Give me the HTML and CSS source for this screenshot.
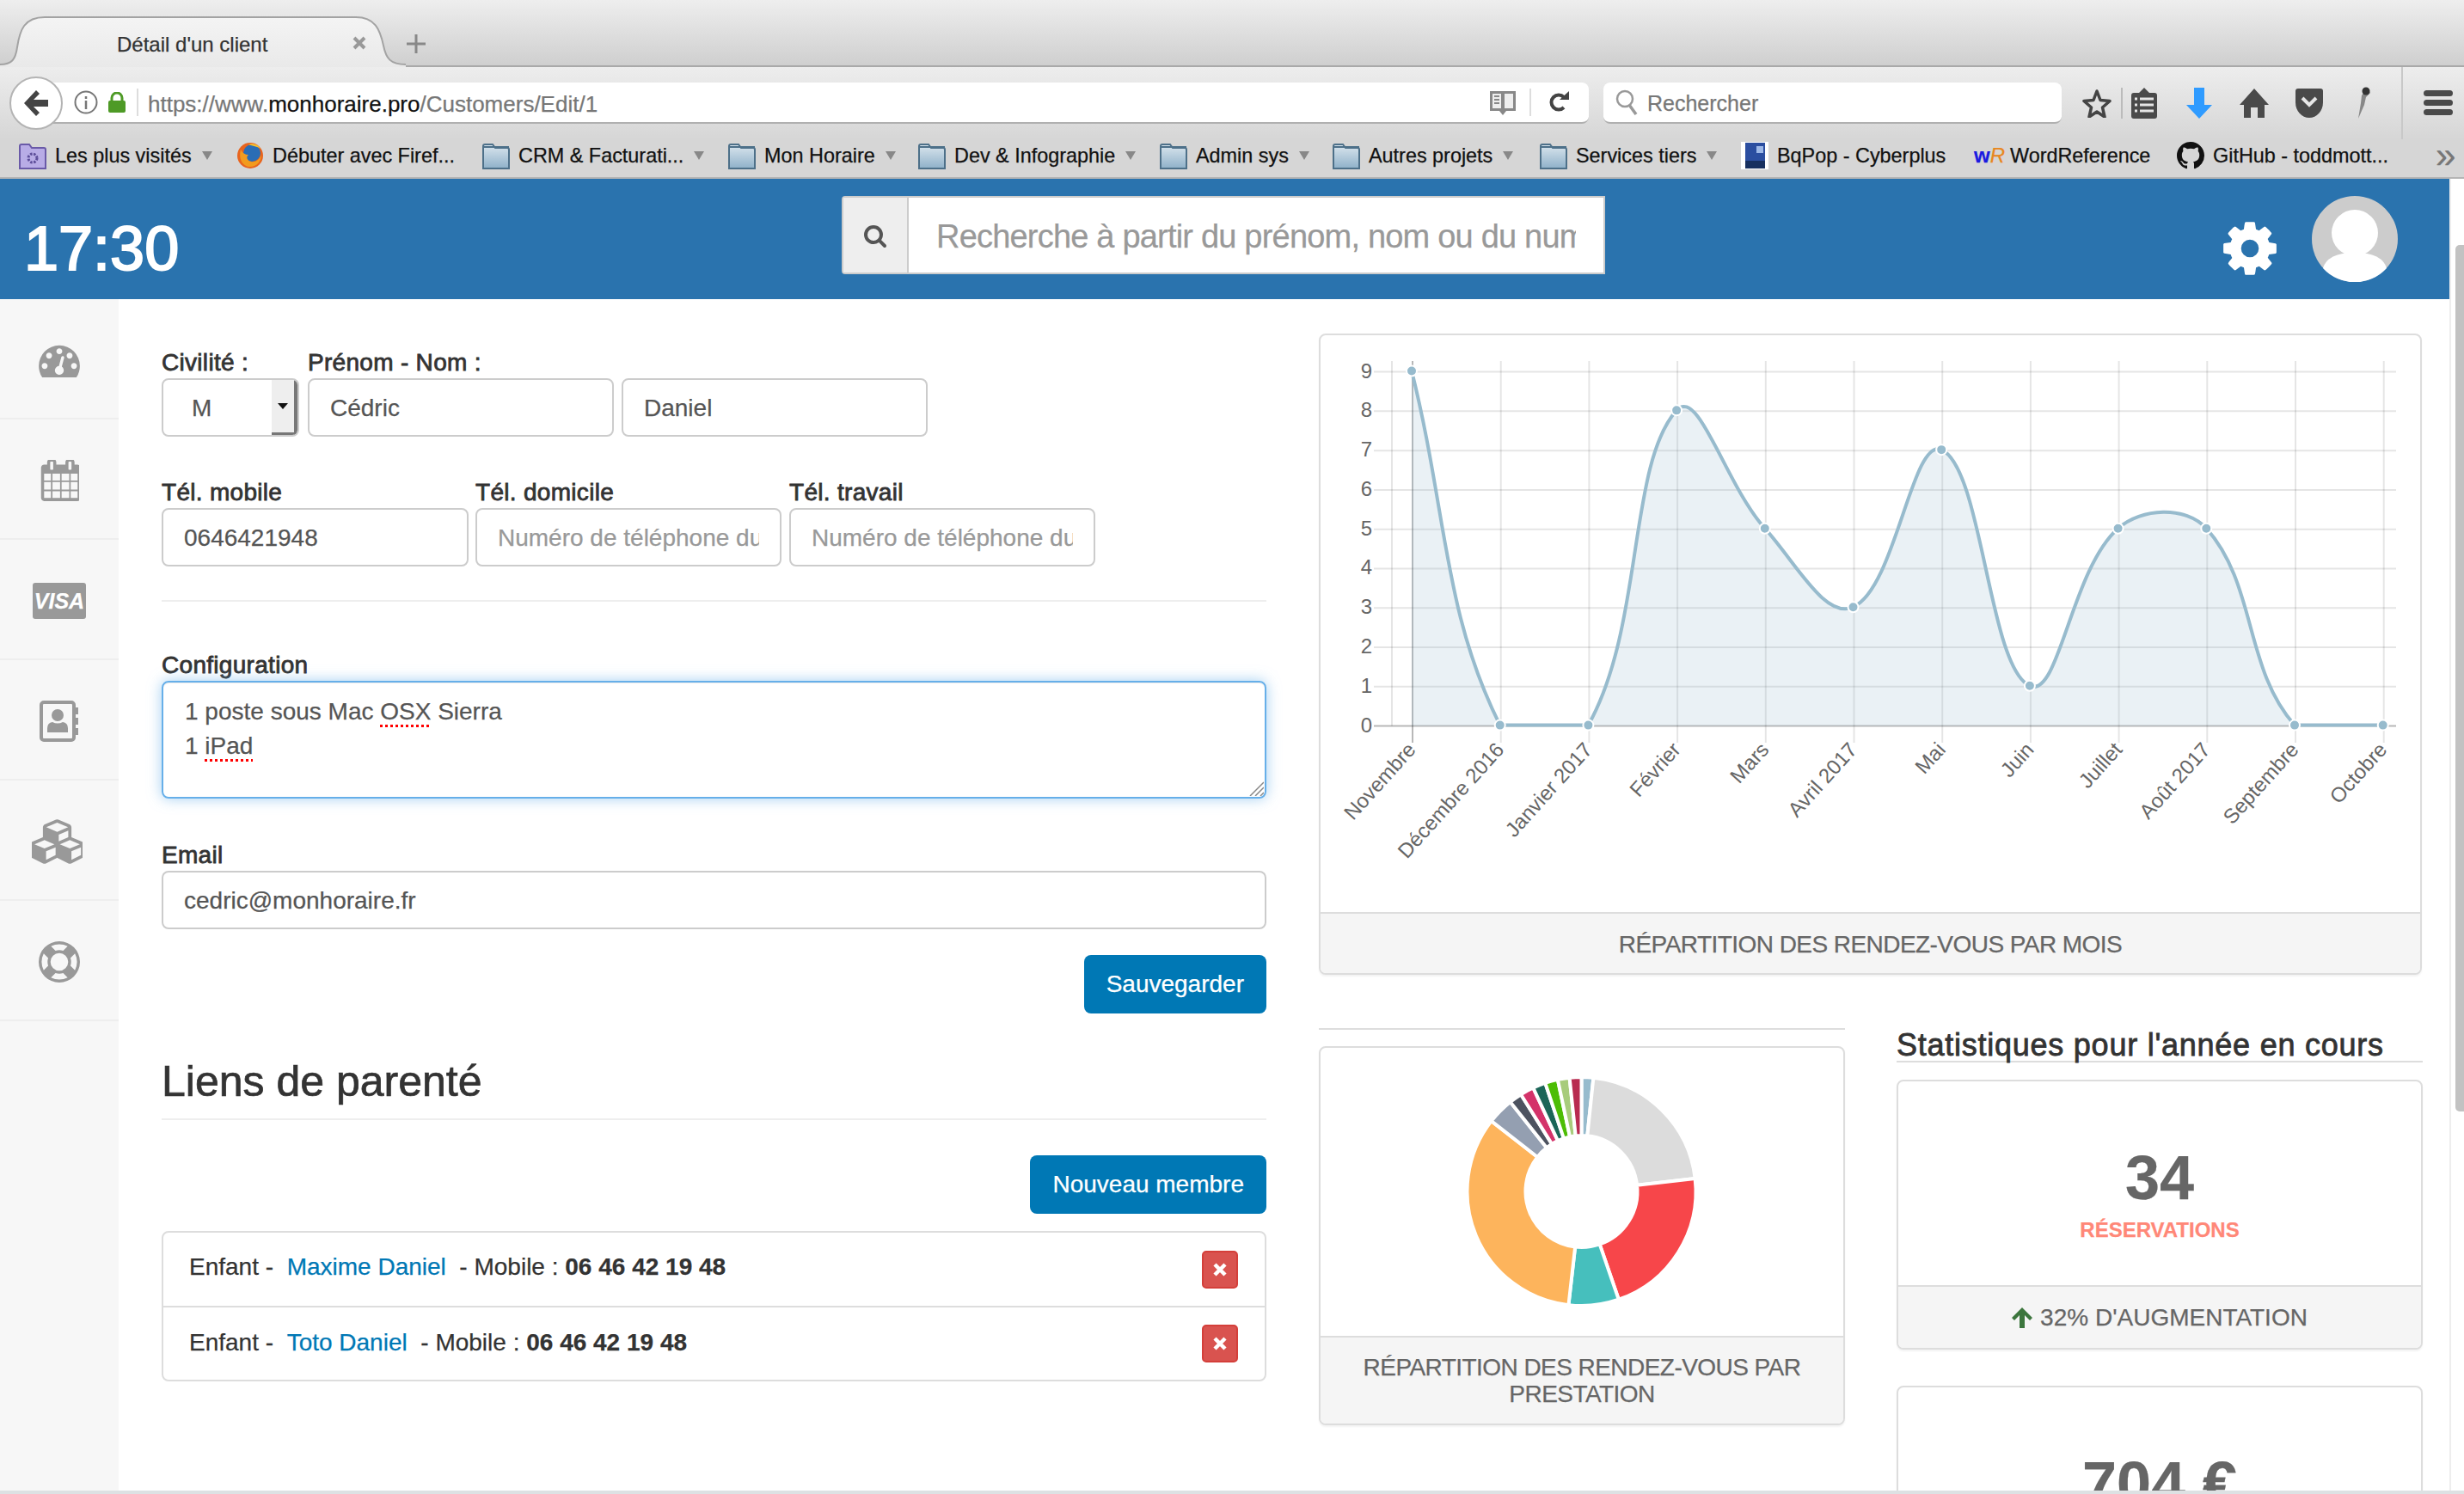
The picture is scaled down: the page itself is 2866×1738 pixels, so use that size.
FILE: index.html
```html
<!DOCTYPE html>
<html lang="fr">
<head>
    <meta charset="UTF-8">
    <title>Détail d'un client</title>
    <link rel="stylesheet" href="styles.css">
</head>
<body>

    <div class="tabstrip">
        <svg class="tab-shape" viewBox="0 0 480 60" width="480" height="60">
            <defs>
                <linearGradient id="tabfill" x1="0" y1="0" x2="0" y2="1">
                    <stop offset="0" stop-color="#f4f4f4"/>
                    <stop offset="1" stop-color="#e9e9e9"/>
                </linearGradient>
            </defs>
            <path d="M0 57c14 0 18-6 20-20 3-20 8-35 32-35h362c22 0 28 14 32 33 3 15 8 22 26 22v3H0z" fill="url(#tabfill)"/>
            <path d="M0 57c14 0 18-6 20-20 3-20 8-35 32-35h362c22 0 28 14 32 33 3 15 8 22 26 22" fill="none" stroke="#a3a3a3" stroke-width="2"/>
        </svg>
        <span class="tab-title">Détail d'un client</span>
        <svg class="tab-close" viewBox="0 0 16 16" width="16" height="16"><path d="M2 2l12 12M14 2L2 14" stroke="#999" stroke-width="4"/></svg>
        <svg class="tab-new" viewBox="0 0 22 22" width="22" height="22"><path d="M11 0v22M0 11h22" stroke="#888" stroke-width="3"/></svg>
    </div>

    <div class="navbar">
        <div class="back-btn">
            <svg viewBox="0 0 28 30" width="28" height="30"><path d="M14 0l4 4-7 7h17v8H11l7 7-4 4L0 15z" fill="#444"/></svg>
        </div>
        <div class="urlbar">
            <svg class="url-info" viewBox="0 0 28 28" width="28" height="28"><circle cx="14" cy="14" r="12.500" fill="none" stroke="#777" stroke-width="2"/><path d="M14 7v3M14 12v10" stroke="#777" stroke-width="2.500"/></svg>
            <svg class="url-lock" viewBox="0 0 20 24" width="20" height="24"><path d="M4 10V7a6 6 0 0112 0v3" fill="none" stroke="#4e9a26" stroke-width="3"/><rect y="10" width="20" height="14" rx="2" fill="#4e9a26"/></svg>
            <span class="url-sep"></span>
            <span class="url-text">https://www.<b>monhoraire.pro</b>/Customers/Edit/1</span>
            <svg class="url-reader" viewBox="0 0 32 32" width="32" height="32"><path d="M1 3h30v23H20l-4 5-4-5H1z" fill="#888"/><path d="M4 6h10v17H4zM18 6h10v17H18z" fill="#eee"/><path d="M6 9h6M6 13h6M6 17h6" stroke="#888" stroke-width="2"/></svg>
            <span class="url-sep"></span>
            <svg class="url-reload" viewBox="0 0 24 28" width="24" height="28"><path d="M18 20a8.500 8.500 0 1 1 0-12" fill="none" stroke="#444" stroke-width="4"/><path d="M13 11h11V1z" fill="#444"/></svg>
        </div>
        <div class="searchbar">
            <svg viewBox="0 0 26 30" width="26" height="30"><circle cx="11" cy="11" r="9" fill="none" stroke="#999" stroke-width="2.500"/><path d="M16 18l8 11" stroke="#999" stroke-width="3.500"/></svg>
            <span>Rechercher</span>
        </div>
        <div class="nav-icons">
            <svg class="nav-star" viewBox="0 0 34 34" width="34" height="34"><path d="M17 3l4 10.500 11 1-8.500 7.500 2.500 11L17 27l-9 6 2.500-11L2 14.500l11-1z" fill="none" stroke="#444" stroke-width="3.500" stroke-linejoin="round"/></svg>
            <span class="nav-sep"></span>
            <svg class="nav-list" viewBox="0 0 30 36" width="30" height="36"><path d="M15 0l6 6h6a3 3 0 013 3v24a3 3 0 01-3 3H3a3 3 0 01-3-3V9a3 3 0 013-3h6z" fill="#4a4a4a"/><path d="M10 13h16M10 20h16M10 27h16M4 13h3M4 20h3M4 27h3" stroke="#e6e6e6" stroke-width="3"/></svg>
            <svg class="nav-down" viewBox="0 0 30 36" width="30" height="36"><path d="M9 0h12v20h9L15 36 0 20h9z" fill="#2f9bff"/></svg>
            <svg class="nav-home" viewBox="0 0 34 34" width="34" height="34"><path d="M17 0l17 19h-5v15h-8V22h-8v12H5V19H0z" fill="#4a4a4a"/></svg>
            <svg class="nav-pocket" viewBox="0 0 32 34" width="32" height="34"><path d="M3 0h26a3 3 0 013 3v13a16 18 0 01-32 0V3a3 3 0 013-3z" fill="#4a4a4a"/><path d="M8 11l8 8 8-8" fill="none" stroke="#e6e6e6" stroke-width="4"/></svg>
            <svg class="nav-pin" viewBox="0 0 20 40" width="20" height="40"><path d="M14 2l4 6-5 5-2 9-7 16 3-18 1-9z" fill="#888"/><circle cx="13" cy="6" r="4.500" fill="#333"/></svg>
            <span class="nav-sep nav-sep-last"></span>
            <svg class="nav-menu" viewBox="0 0 34 30" width="34" height="30"><rect width="34" height="7" rx="3.500" fill="#4a4a4a"/><rect y="11" width="34" height="7" rx="3.500" fill="#4a4a4a"/><rect y="22" width="34" height="7" rx="3.500" fill="#4a4a4a"/></svg>
        </div>
    </div>

    <div class="bookmarks">
        <div class="bm">
            <svg class="bm-icon" viewBox="0 0 32 32" width="32" height="32"><path d="M1 31V5q0-2 2-2h9l3 4h14q2 0 2 2v22z" fill="#b8ace6" stroke="#6a5aa8" stroke-width="2"/><circle cx="16" cy="19" r="5" fill="none" stroke="#5c4d99" stroke-width="3" stroke-dasharray="2.500 1.500"/></svg>
            <span>Les plus visités</span><i class="caret"></i>
        </div>
        <div class="bm">
            <svg class="bm-icon" viewBox="0 0 32 32" width="32" height="32"><circle cx="16" cy="16" r="15" fill="#e8641e"/><circle cx="18" cy="13" r="10" fill="#2a6db5"/><path d="M5 9c-3 12 3 20 11 20s13-7 13-14c-2 6-7 9-12 8-5-1-6-6-3-8-4 0-7-2-9-6z" fill="#f29b1d"/><path d="M14 3c6-2 11 0 14 5-4-3-9-3-14-5z" fill="#f6c12e"/></svg>
            <span>Débuter avec Firef...</span>
        </div>
        <div class="bm">
            <svg class="bm-icon" viewBox="0 0 32 32" width="32" height="32"><use href="#folder"/></svg>
            <span>CRM &amp; Facturati...</span><i class="caret"></i>
        </div>
        <div class="bm">
            <svg class="bm-icon" viewBox="0 0 32 32" width="32" height="32"><use href="#folder"/></svg>
            <span>Mon Horaire</span><i class="caret"></i>
        </div>
        <div class="bm">
            <svg class="bm-icon" viewBox="0 0 32 32" width="32" height="32"><use href="#folder"/></svg>
            <span>Dev &amp; Infographie</span><i class="caret"></i>
        </div>
        <div class="bm">
            <svg class="bm-icon" viewBox="0 0 32 32" width="32" height="32"><use href="#folder"/></svg>
            <span>Admin sys</span><i class="caret"></i>
        </div>
        <div class="bm">
            <svg class="bm-icon" viewBox="0 0 32 32" width="32" height="32"><use href="#folder"/></svg>
            <span>Autres projets</span><i class="caret"></i>
        </div>
        <div class="bm">
            <svg class="bm-icon" viewBox="0 0 32 32" width="32" height="32"><use href="#folder"/></svg>
            <span>Services tiers</span><i class="caret"></i>
        </div>
        <div class="bm">
            <svg class="bm-icon" viewBox="0 0 32 32" width="32" height="32"><rect width="32" height="32" fill="#fff"/><rect x="5" y="1" width="23" height="30" fill="#2b4ea0"/><rect x="18" y="5" width="8" height="8" fill="#9db8e8"/><rect x="5" y="22" width="23" height="9" fill="#17305f"/></svg>
            <span>BqPop - Cyberplus</span>
        </div>
        <div class="bm">
            <span class="wr-logo"><b>w</b><em>R</em></span>
            <span>WordReference</span>
        </div>
        <div class="bm">
            <svg class="bm-icon" viewBox="0 0 16 16" width="32" height="32"><path d="M8 0C3.58 0 0 3.58 0 8c0 3.540 2.290 6.530 5.470 7.590.4.070.55-.17.55-.38 0-.19-.01-.82-.01-1.490-2.010.37-2.530-.49-2.690-.94-.09-.23-.48-.94-.82-1.130-.28-.15-.68-.52-.01-.53.63-.01 1.080.58 1.230.82.72 1.210 1.870.87 2.330.66.07-.52.28-.87.51-1.070-1.780-.2-3.640-.89-3.640-3.950 0-.87.31-1.590.82-2.150-.08-.2-.36-1.020.08-2.120 0 0 .67-.21 2.200.82.64-.18 1.320-.27 2-.27.68 0 1.360.09 2 .27 1.530-1.040 2.200-.82 2.200-.82.44 1.100.16 1.920.08 2.120.51.56.82 1.270.82 2.150 0 3.070-1.870 3.750-3.650 3.950.29.25.54.73.54 1.480 0 1.070-.01 1.930-.01 2.200 0 .21.15.46.55.38A8.013 8.013 0 0016 8c0-4.420-3.580-8-8-8z" fill="#111"/></svg>
            <span>GitHub - toddmott...</span>
        </div>
        <div class="bm-more">»</div>
    </div>

    <svg class="defs-only" width="0" height="0">
        <defs>
            <linearGradient id="folderfill" x1="0" y1="0" x2="0" y2="1">
                <stop offset="0" stop-color="#dbe6ee"/>
                <stop offset="1" stop-color="#8fb1c9"/>
            </linearGradient>
            <g id="folder">
                <path d="M1 31V5q0-2 2-2h9l3 4h14q2 0 2 2v22z" fill="url(#folderfill)" stroke="#4d7089" stroke-width="2"/>
                <path d="M1 6h30" stroke="#4d7089" stroke-width="2"/>
            </g>
        </defs>
    </svg>

    <div class="page">
        <div class="app">
            <header class="topbar">
                <div class="clock">17:30</div>
                <div class="search-group">
                    <div class="search-addon">
                        <svg viewBox="0 0 1792 1792" width="28" height="28"><path fill="#555" d="M1216 832q0-185-131.500-316.500t-316.500-131.500-316.500 131.500-131.500 316.500 131.500 316.500 316.500 131.500 316.500-131.500 131.500-316.500zm512 832q0 52-38 90t-90 38q-54 0-90-38l-343-342q-179 124-399 124-143 0-273.500-55.500t-225-150-150-225-55.500-273.500 55.500-273.500 150-225 225-150 273.500-55.500 273.500 55.500 225 150 150 225 55.500 273.500q0 220-124 399l343 343q37 37 37 90z"/></svg>
                    </div>
                    <input class="search-input" type="text" placeholder="Recherche à partir du prénom, nom ou du numéro de téléphone">
                </div>
                <svg class="gear" viewBox="0 0 1792 1792" width="72" height="72"><path fill="#fff" d="M1152 896q0-106-75-181t-181-75-181 75-75 181 75 181 181 75 181-75 75-181zm512-109v222q0 12-8 23t-20 13l-185 28q-19 54-39 91 35 50 107 138 10 12 10 25t-9 23q-27 37-99 108t-94 71q-12 0-26-9l-138-108q-44 23-91 38-16 136-29 186-7 28-36 28h-222q-14 0-24.500-8.500t-11.500-21.500l-28-184q-49-16-90-37l-141 107q-10 9-25 9-14 0-25-11-126-114-165-168-7-10-7-23 0-12 8-23 15-21 51-66.500t54-70.500q-27-50-41-99l-183-27q-13-2-21-12.500t-8-23.500v-222q0-12 8-23t19-13l186-28q14-46 39-92-40-57-107-138-10-12-10-24 0-10 9-23 26-36 98.500-107.500t94.500-71.500q13 0 26 10l138 107q44-23 91-38 16-136 29-186 7-28 36-28h222q14 0 24.500 8.500t11.500 21.500l28 184q49 16 90 37l142-107q9-9 24-9 13 0 25 10 129 119 165 170 7 8 7 22 0 12-8 23-15 21-51 66.500t-54 70.500q26 50 41 98l183 28q13 2 21 12.500t8 23.500z"/></svg>
                <svg class="avatar" viewBox="0 0 100 100" width="100" height="100">
                    <circle cx="50" cy="50" r="50" fill="#ccc"/>
                    <ellipse cx="50" cy="43" rx="27" ry="27" fill="#fff"/>
                    <path d="M13 84c4-14 20-18 37-18s33 4 37 18a50 50 0 01-74 0z" fill="#fff"/>
                </svg>
            </header>

            <div class="main">
                <nav class="sidebar">
                    <a class="side-item">
                        <svg viewBox="0 0 1792 1500" width="48" height="40"><path fill="#999" d="M384 1152q0-53-37.500-90.500t-90.500-37.500-90.500 37.500-37.500 90.500 37.500 90.500 90.500 37.500 90.500-37.500 37.500-90.500zm192-448q0-53-37.500-90.500t-90.500-37.500-90.500 37.500-37.500 90.500 37.500 90.500 90.500 37.500 90.500-37.500 37.500-90.500zm428 481l101-382q6-26-7.500-48.500t-38.500-29.500-48 6.500-30 39.500l-101 382q-60 5-107 43.500t-63 98.500q-20 77 20 146t117 89 146-20 89-117q16-60-6-117t-72-91zm660-33q0-53-37.500-90.500t-90.500-37.500-90.500 37.500-37.500 90.500 37.500 90.500 90.500 37.500 90.500-37.500 37.500-90.500zm-640-640q0-53-37.500-90.500t-90.500-37.500-90.500 37.500-37.500 90.500 37.500 90.500 90.500 37.500 90.500-37.500 37.500-90.500zm448 192q0-53-37.500-90.500t-90.500-37.500-90.500 37.500-37.500 90.500 37.500 90.500 90.500 37.500 90.500-37.500 37.500-90.500zm320 448q0 261-141 483-19 29-54 29h-1402q-35 0-54-29-141-221-141-483 0-182 71-348t191-286 286-191 348-71 348 71 286 191 191 286 71 348z" transform="translate(0 -150)"/></svg>
                    </a>
                    <a class="side-item">
                        <svg viewBox="0 64 1664 1728" width="46" height="48"><path fill="#999" d="M192 1664h288v-288h-288v288zm352 0h320v-288h-320v288zm-352-352h288v-320h-288v320zm352 0h320v-320h-320v320zm-352-384h288v-288h-288v288zm736 736h320v-288h-320v288zm-384-736h320v-288h-320v288zm768 736h288v-288h-288v288zm-384-352h320v-320h-320v320zm-352-864v-288q0-13-9.500-22.500t-22.500-9.500h-64q-13 0-22.500 9.500t-9.500 22.500v288q0 13 9.500 22.500t22.500 9.500h64q13 0 22.500-9.500t9.500-22.500zm736 864h288v-320h-288v320zm-384-384h320v-288h-320v288zm384 0h288v-288h-288v288zm32-480v-288q0-13-9.500-22.500t-22.500-9.500h-64q-13 0-22.500 9.500t-9.500 22.500v288q0 13 9.500 22.500t22.500 9.500h64q13 0 22.500-9.500t9.500-22.500zm384-64v1280q0 52-38 90t-90 38h-1408q-52 0-90-38t-38-90v-1280q0-52 38-90t90-38h128v-96q0-66 47-113t113-47h64q66 0 113 47t47 113v96h384v-96q0-66 47-113t113-47h64q66 0 113 47t47 113v96h128q52 0 90 38t38 90z"/></svg>
                    </a>
                    <a class="side-item">
                        <span class="visa-card">VISA</span>
                    </a>
                    <a class="side-item">
                        <svg viewBox="0 0 46 48" width="46" height="48"><rect x="2" y="2" width="38" height="44" rx="3" fill="none" stroke="#999" stroke-width="4"/><path d="M40 8h5v8h-5zM40 20h5v8h-5zM40 32h5v8h-5z" fill="#999"/><circle cx="21" cy="17" r="7" fill="#999"/><path d="M9 37v-5q0-6 6-7 6 3 12 0 6 1 6 7v5z" fill="#999"/></svg>
                    </a>
                    <a class="side-item side-cubes">
                        <svg viewBox="0 0 2048 1792" width="59" height="52"><path fill="#999" d="M576 1632l384-192v-314l-384 164v342zm-64-454l404-173-404-173-404 173 404 173zm1088 454l384-192v-314l-384 164v342zm-64-454l404-173-404-173-404 173 404 173zm-448-293l384-165v-266l-384 164v267zm-64-379l441-189-441-189-441 189 441 189zm1088 518v416q0 36-19 67t-52 47l-448 224q-25 14-57 14t-57-14l-448-224q-4-2-7-4-2 2-7 4l-448 224q-25 14-57 14t-57-14l-448-224q-33-16-52-47t-19-67v-416q0-38 21.500-70t56.500-48l434-186v-400q0-38 21.500-70t56.500-48l448-192q23-10 50-10t50 10l448 192q35 16 56.500 48t21.500 70v400l434 186q36 16 57 48t21 70z"/></svg>
                    </a>
                    <a class="side-item">
                        <svg viewBox="0 0 1792 1792" width="48" height="48"><path fill="#999" d="M896 0q182 0 348 71t286 191 191 286 71 348-71 348-191 286-286 191-348 71-348-71-286-191-191-286-71-348 71-348 191-286 286-191 348-71zm0 128q-190 0-361 90l194 194q82-28 167-28t167 28l194-194q-171-90-361-90zm-678 1129l194-194q-28-82-28-167t28-167l-194-194q-90 171-90 361t90 361zm678 407q190 0 361-90l-194-194q-82 28-167 28t-167-28l-194 194q171 90 361 90zm0-384q159 0 271.500-112.500t112.500-271.500-112.500-271.500-271.500-112.500-271.500 112.500-112.500 271.500 112.500 271.500 271.500 112.500zm484-217l194 194q90-171 90-361t-90-361l-194 194q28 82 28 167t-28 167z"/></svg>
                    </a>
                </nav>

                <section class="form-col">
                    <div class="form-row">
                        <div class="group group-civ">
                            <label>Civilité :</label>
                            <div class="select-box"><span>M</span><i class="select-arrow"></i></div>
                        </div>
                        <div class="group">
                            <label>Prénom - Nom :</label>
                            <div class="name-pair">
                                <input class="control control-name" type="text" value="Cédric">
                                <input class="control control-name" type="text" value="Daniel">
                            </div>
                        </div>
                    </div>

                    <div class="form-row form-row-phone">
                        <div class="group">
                            <label>Tél. mobile</label>
                            <input class="control control-mobile" type="text" value="0646421948">
                        </div>
                        <div class="group">
                            <label>Tél. domicile</label>
                            <input class="control control-name" type="text" placeholder="Numéro de téléphone du domicile">
                        </div>
                        <div class="group">
                            <label>Tél. travail</label>
                            <input class="control control-name" type="text" placeholder="Numéro de téléphone du travail">
                        </div>
                    </div>

                    <hr class="sep">

                    <label>Configuration</label>
                    <div class="textarea-box">
                        <div>1 poste sous Mac <span class="misspelt">OSX</span> Sierra</div>
                        <div>1 <span class="misspelt">iPad</span></div>
                        <svg class="resize-grip" viewBox="0 0 18 18" width="18" height="18"><path d="M18 2L2 18M18 8L8 18M18 14l-4 4" stroke="#888" stroke-width="1.500"/></svg>
                    </div>

                    <label class="label-email">Email</label>
                    <input class="control" type="text" value="cedric@monhoraire.fr">

                    <div class="actions actions-save"><button class="btn">Sauvegarder</button></div>

                    <h3 class="section-title">Liens de parenté</h3>

                    <div class="actions"><button class="btn">Nouveau membre</button></div>

                    <ul class="relations">
                        <li>
                            <span>Enfant - &nbsp;<a>Maxime Daniel</a> &nbsp;- Mobile : <b>06 46 42 19 48</b></span>
                            <button class="btn-del"><svg viewBox="0 0 18 16" width="18" height="16"><path d="M3 2l12 12M15 2L3 14" stroke="#fff" stroke-width="4.500"/></svg></button>
                        </li>
                        <li>
                            <span>Enfant - &nbsp;<a>Toto Daniel</a> &nbsp;- Mobile : <b>06 46 42 19 48</b></span>
                            <button class="btn-del"><svg viewBox="0 0 18 16" width="18" height="16"><path d="M3 2l12 12M15 2L3 14" stroke="#fff" stroke-width="4.500"/></svg></button>
                        </li>
                    </ul>
                </section>

                <section class="stats-col">
                    <div class="panel panel-line">
                        <svg id="lineChart" class="chart-line" viewBox="1536 390 1279 671"></svg>
                        <div class="panel-foot chart-foot">RÉPARTITION DES RENDEZ-VOUS PAR MOIS</div>
                    </div>

                    <div class="bottom-row">
                        <div class="bottom-left">
                            <div class="panel panel-donut">
                                <svg id="donutChart" class="chart-donut" viewBox="1536 1219 607 335"></svg>
                                <div class="panel-foot chart-foot panel-foot-two">RÉPARTITION DES RENDEZ-VOUS PAR PRESTATION</div>
                            </div>
                        </div>
                        <div class="bottom-right">
                            <h4 class="stats-title">Statistiques pour l'année en cours</h4>
                            <div class="panel stat">
                                <div class="stat-body">
                                    <div class="stat-num">34</div>
                                    <div class="stat-label">RÉSERVATIONS</div>
                                </div>
                                <div class="panel-foot">
                                    <svg class="up-arrow" viewBox="0 0 24 24" width="24" height="24"><path d="M12 0l12 12-3 3-6-6v15H9V9l-6 6-3-3z" fill="#3c763d"/></svg>
                                    32% D'AUGMENTATION
                                </div>
                            </div>
                            <div class="panel stat">
                                <div class="stat-body">
                                    <div class="stat-num">704 €</div>
                                </div>
                            </div>
                        </div>
                    </div>
                </section>
            </div>
        </div>
        <div class="scrolltrack"><div class="scrollthumb"></div></div>
    </div>
    <div class="window-edge"></div>

    <script src="charts.js"></script>
</body>
</html>
```

FILE: styles.css
```css
* {
    box-sizing: border-box;
}
html, body {
    height: 100%;
}
body {
    margin: 0;
    width: 2866px;
    height: 1738px;
    overflow: hidden;
    display: flex;
    flex-direction: column;
    font-family: "Liberation Sans", Arial, sans-serif;
    font-size: 28px;
    color: #333;
    background-color: #fff;
    -webkit-text-stroke: .25px;
}

/* browser chrome */
.tabstrip {
    position: relative;
    flex: none;
    height: 78px;
    background: linear-gradient(#eeeeee, #cfcfcf);
    border-bottom: 2px solid #a9a9a9;
}
.tab-shape {
    position: absolute;
    left: 0;
    top: 18px;
}
.tab-title {
    position: absolute;
    left: 136px;
    top: 37px;
    font-size: 24px;
    line-height: 30px;
    color: #333;
}
.tab-close {
    position: absolute;
    left: 410px;
    top: 42px;
}
.tab-new {
    position: absolute;
    left: 473px;
    top: 40px;
}
.navbar {
    position: relative;
    flex: none;
    height: 84px;
    display: flex;
    align-items: center;
    padding-left: 11px;
    background: linear-gradient(#ededed, #d6d6d6);
}
.back-btn {
    position: relative;
    z-index: 2;
    flex: none;
    width: 62px;
    height: 62px;
    display: flex;
    justify-content: center;
    align-items: center;
    background-color: #fff;
    border: 2px solid #b4b4b4;
    border-radius: 50%;
}
.urlbar {
    flex: none;
    width: 1788px;
    height: 48px;
    margin-left: -13px;
    display: flex;
    align-items: center;
    background-color: #fff;
    border-bottom: 2px solid #b0b0b0;
    border-radius: 0 8px 8px 0;
}
.url-info {
    margin-left: 26px;
}
.url-lock {
    margin-left: 12px;
}
.url-sep {
    flex: none;
    width: 2px;
    height: 32px;
    margin-left: 13px;
    background-color: #ddd;
}
.url-text {
    flex: 1;
    margin-left: 11px;
    padding-top: 5px;
    font-size: 26px;
    color: #777;
}
.url-text b {
    font-weight: normal;
    color: #111;
}
.url-reader {
    margin-right: -3px;
}
.url-reader + .url-sep {
    margin-left: 18px;
}
.url-reload {
    margin-left: 20px;
    margin-right: 23px;
}
.searchbar {
    flex: none;
    width: 533px;
    height: 48px;
    margin-left: 17px;
    display: flex;
    align-items: center;
    gap: 11px;
    padding-left: 14px;
    font-size: 25px;
    color: #777;
    background-color: #fff;
    border-bottom: 2px solid #b0b0b0;
    border-radius: 8px;
}
.searchbar span {
    padding-top: 2px;
}
.nav-icons {
    flex: 1;
    align-self: stretch;
    position: relative;
}
.nav-icons svg, .nav-sep {
    position: absolute;
    top: 50%;
    transform: translateY(-50%);
}
.nav-star { left: 24px; }
.nav-list { left: 81px; }
.nav-down { left: 145px; }
.nav-home { left: 207px; }
.nav-pocket { left: 272px; }
.nav-pin { left: 341px; }
.nav-menu { left: 421px; }
.nav-sep {
    left: 69px;
    width: 2px;
    height: 36px;
    background-color: #bbb;
}
.nav-sep-last {
    left: 395px;
    height: 84px;
    background-color: #c8c8c8;
}
.bookmarks {
    flex: none;
    height: 46px;
    display: grid;
    grid-template-columns: 253px 286px 286px 221px 281px 201px 241px 234px 271px 236px 301px 1fr;
    align-items: center;
    padding: 0 0 6px 22px;
    font-size: 23.4px;
    color: #111;
    background-color: #d6d6d6;
    border-bottom: 2px solid #b5b5b5;
    white-space: nowrap;
}
.bm {
    display: flex;
    align-items: center;
    gap: 10px;
}
.bm-icon {
    flex: none;
}
.caret {
    width: 0;
    height: 0;
    margin-left: 2px;
    border-left: 6px solid transparent;
    border-right: 6px solid transparent;
    border-top: 10px solid #888;
}
.wr-logo {
    flex: none;
    width: 32px;
    font-size: 24px;
    line-height: 28px;
}
.wr-logo b {
    color: #1a1ae0;
}
.wr-logo em {
    color: #e8871e;
}
.bm-more {
    font-size: 42px;
    line-height: 34px;
    color: #777;
}
.defs-only {
    position: absolute;
}

/* app */
.page {
    flex: 1;
    min-height: 0;
    display: flex;
}
.app {
    flex: 1;
    min-width: 0;
    display: flex;
    flex-direction: column;
    overflow: hidden;
}
.topbar {
    flex: none;
    height: 140px;
    display: flex;
    align-items: center;
    background-color: #2a73ae;
}
.clock {
    flex: none;
    width: 979px;
    padding-left: 28px;
    margin-top: 22px;
    font-size: 72px;
    line-height: 80px;
    color: #fff;
    -webkit-text-stroke: 2px #fff;
}
.search-group {
    flex: none;
    width: 888px;
    height: 91px;
    margin-top: -9px;
    display: flex;
    border: 2px solid #ccc;
    border-radius: 4px 0 0 4px;
}
.search-addon {
    flex: none;
    width: 76px;
    display: flex;
    justify-content: center;
    align-items: center;
    background-color: #eee;
    border-right: 2px solid #ccc;
}
.search-input {
    flex: 1;
    min-width: 0;
    border: 0;
    padding: 3px 32px 0;
    font-family: inherit;
    font-size: 38px;
    letter-spacing: -.8px;
    color: #555;
    background-color: #fff;
}
.search-input::placeholder {
    color: #999;
}
.gear {
    flex: none;
    margin-left: 714px;
    margin-top: 22px;
}
.avatar {
    flex: none;
    margin-left: 36px;
}
.main {
    flex: 1;
    min-height: 0;
    display: flex;
}
.sidebar {
    flex: none;
    width: 138px;
    background-color: #f7f7f7;
}
.side-item {
    height: 140px;
    display: flex;
    justify-content: center;
    align-items: center;
    padding-top: 4px;
    border-bottom: 2px solid #eee;
}
.side-cubes {
    padding-right: 5px;
}
.visa-card {
    width: 62px;
    height: 42px;
    font-size: 25px;
    font-weight: bold;
    font-style: italic;
    line-height: 42px;
    text-align: center;
    color: #fff;
    background-color: #999;
    border-radius: 3px;
}

/* form */
.form-col {
    flex: none;
    width: 1285px;
    margin-left: 50px;
    padding-top: 52px;
}
label {
    display: block;
    height: 40px;
    padding-top: 3px;
    line-height: 37px;
    letter-spacing: .3px;
    color: #333;
    -webkit-text-stroke: .8px #333;
}
.form-row {
    display: flex;
    gap: 10px;
}
.form-row-phone {
    margin-top: 43px;
    gap: 8px;
}
.form-row-phone .group + .group + .group {
    margin-left: 1px;
}
.group-civ {
    width: 160px;
}
.name-pair {
    display: flex;
    gap: 9px;
}
.control {
    display: block;
    width: 100%;
    height: 68px;
    padding: 2px 24px 0;
    font-family: inherit;
    font-size: 28px;
    color: #555;
    background-color: #fff;
    border: 2px solid #ccc;
    border-radius: 8px;
    outline: 0;
}
.control::placeholder {
    color: #999;
}
.control-name {
    width: 356px;
}
.control-mobile {
    width: 357px;
}
.select-box {
    height: 68px;
    display: flex;
    align-items: center;
    justify-content: space-between;
    padding-left: 33px;
    font-size: 28px;
    color: #555;
    border: 2px solid #ccc;
    border-radius: 8px;
    overflow: hidden;
}
.select-box span {
    padding-top: 2px;
}
.select-arrow {
    align-self: stretch;
    position: relative;
    width: 30px;
    background-color: #eee;
    border-right: 4px solid #777;
    border-bottom: 3px solid #777;
}
.select-arrow::after {
    content: "";
    position: absolute;
    left: 7px;
    top: 27px;
    border-left: 6px solid transparent;
    border-right: 6px solid transparent;
    border-top: 7px solid #111;
}
.sep {
    height: 2px;
    margin: 39px 0 52px;
    border: 0;
    background-color: #eee;
}
.textarea-box {
    position: relative;
    height: 137px;
    padding: 14px 25px;
    line-height: 40px;
    color: #555;
    border: 2px solid #66afe9;
    border-radius: 8px;
    box-shadow: inset 0 1px 1px rgba(0,0,0,.075), 0 0 16px rgba(102,175,233,.6);
}
.misspelt {
    text-decoration: underline dotted red 3px;
    text-underline-offset: 6px;
}
.resize-grip {
    position: absolute;
    right: 1px;
    bottom: 1px;
}
.label-email {
    margin-top: 44px;
}
.actions {
    display: flex;
    justify-content: flex-end;
}
.actions-save {
    margin-top: 30px;
}
.btn {
    height: 68px;
    padding: 0 26px;
    font-family: inherit;
    font-size: 28px;
    color: #fff;
    background-color: #0078b5;
    border: 0;
    border-radius: 8px;
}
.section-title {
    height: 124px;
    margin: 0 0 41px;
    padding-top: 50px;
    font-size: 50px;
    font-weight: normal;
    line-height: 58px;
    color: #333;
    border-bottom: 2px solid #eee;
    -webkit-text-stroke: .7px #333;
}
.relations {
    margin: 20px 0 0;
    padding: 0;
    list-style: none;
    border: 2px solid #ddd;
    border-radius: 8px;
}
.relations li {
    height: 85px;
    display: flex;
    justify-content: space-between;
    align-items: center;
    padding: 0 31px 0 30px;
}
.relations li + li {
    border-top: 2px solid #ddd;
    height: 86px;
}
.relations li > span {
    margin-top: -6px;
}
.relations li + li > span {
    margin-top: -3px;
}
.relations a {
    color: #0078b5;
}
.btn-del {
    width: 42px;
    height: 44px;
    padding: 0;
    display: flex;
    justify-content: center;
    align-items: center;
    background-color: #d9534f;
    border: 2px solid #d43f3a;
    border-radius: 5px;
}

/* right column */
.stats-col {
    flex: 1;
    min-width: 0;
    margin-left: 61px;
    margin-right: 32px;
    padding-top: 40px;
}
.panel {
    background-color: #fff;
    border: 2px solid #ddd;
    border-radius: 8px;
    box-shadow: 0 2px 2px rgba(0,0,0,.05);
    overflow: hidden;
}
.panel-line {
    height: 746px;
}
.chart-line, .chart-donut {
    display: block;
    width: 100%;
    -webkit-text-stroke: 0;
}
.chart-line {
    height: 671px;
}
.chart-donut {
    height: 335px;
}
.tick {
    font-size: 24px;
    fill: #666;
}
.panel-foot {
    display: flex;
    justify-content: center;
    align-items: center;
    gap: 9px;
    height: 73px;
    font-size: 28px;
    color: #666;
    background-color: #f5f5f5;
    border-top: 2px solid #ddd;
}
.chart-foot {
    letter-spacing: -.55px;
}
.panel-foot-two {
    height: 102px;
    padding: 0 40px;
    line-height: 31px;
    text-align: center;
}
.bottom-row {
    margin-top: 62px;
    display: flex;
    gap: 60px;
}
.bottom-left, .bottom-right {
    flex: none;
    width: 612px;
}
.bottom-left {
    padding-top: 19px;
    border-top: 2px solid #ddd;
}
.stats-title {
    height: 40px;
    margin: 0 0 20px;
    font-size: 36px;
    font-weight: normal;
    line-height: 40px;
    letter-spacing: .75px;
    color: #333;
    border-bottom: 2px solid #ddd;
    -webkit-text-stroke: .8px #333;
    white-space: nowrap;
}
.stat {
    margin-bottom: 42px;
}
.stat-body {
    height: 237px;
    padding-top: 72px;
    text-align: center;
}
.stat-num {
    font-size: 72px;
    font-weight: bold;
    line-height: 80px;
    color: #666;
}
.stat-label {
    margin-top: 1px;
    font-size: 24px;
    font-weight: bold;
    line-height: 40px;
    color: #ff8878;
}
.up-arrow {
    flex: none;
}

/* scrollbar and window edge */
.scrolltrack {
    flex: none;
    width: 17px;
    padding: 77px 0 0 5px;
    background-color: #fff;
    border-left: 2px solid #eee;
}
.scrollthumb {
    width: 10px;
    height: 1008px;
    background-color: #c2c2c2;
    border-radius: 5px 0 0 5px;
}
.window-edge {
    flex: none;
    height: 4px;
    background-color: #dde1e3;
}
```

FILE: charts.js
```js
var SVG_NS = 'http://www.w3.org/2000/svg';

function el(parent, name, attrs, text) {
    var node = document.createElementNS(SVG_NS, name);
    for (var key in attrs) {
        node.setAttribute(key, attrs[key]);
    }
    if (text) node.textContent = text;
    parent.appendChild(node);
    return node;
}

function drawLineChart() {
    var svg = document.getElementById('lineChart');
    var labels = ['Novembre', 'Décembre 2016', 'Janvier 2017', 'Février', 'Mars', 'Avril 2017',
        'Mai', 'Juin', 'Juillet', 'Août 2017', 'Septembre', 'Octobre'];
    var values = [9, 0, 0, 8, 5, 3, 7, 1, 5, 5, 0, 0];
    var left = 1643, stepX = 102.7;
    var zero = 844.6, stepY = 45.78;
    var grid = 'rgba(0,0,0,.1)', axis = 'rgba(0,0,0,.28)';

    for (var v = 0; v <= 9; v++) {
        var y = zero - v * stepY;
        el(svg, 'line', {x1: 1598, x2: 2787, y1: y, y2: y, stroke: v === 0 ? axis : grid, 'stroke-width': 2});
        el(svg, 'text', {x: 1596, y: y + 7, 'text-anchor': 'end', 'class': 'tick'}, String(v));
    }
    el(svg, 'line', {x1: 1619, x2: 1619, y1: 420, y2: zero, stroke: grid, 'stroke-width': 2});

    var pts = values.map(function (val, i) {
        return {x: left + i * stepX - 1, y: zero - 1 - val * stepY};
    });

    labels.forEach(function (label, i) {
        var x = left + i * stepX;
        el(svg, 'line', {x1: x, x2: x, y1: 420, y2: 864, stroke: i === 0 ? axis : grid, 'stroke-width': 2});
        el(svg, 'text', {
            x: 0, y: 0, 'text-anchor': 'end', 'class': 'tick',
            transform: 'translate(' + (x + 5) + ' 873) rotate(-48)'
        }, label);
    });

    // same bezier as chart.js v1: tension .4, control points capped to the chart area
    var t = 0.4;
    var ctrl = pts.map(function (p, i) {
        var prev = pts[i - 1] || p, next = pts[i + 1] || p;
        var d01 = Math.hypot(p.x - prev.x, p.y - prev.y);
        var d12 = Math.hypot(next.x - p.x, next.y - p.y);
        var sum = (d01 + d12) || 1;
        var fa = t * d01 / sum, fb = t * d12 / sum;
        var cap = function (y) { return Math.min(Math.max(y, 418), zero - 1); };
        return {
            inX: p.x - fa * (next.x - prev.x), inY: cap(p.y - fa * (next.y - prev.y)),
            outX: p.x + fb * (next.x - prev.x), outY: cap(p.y + fb * (next.y - prev.y))
        };
    });

    var d = 'M' + pts[0].x + ' ' + pts[0].y;
    for (var i = 1; i < pts.length; i++) {
        d += 'C' + ctrl[i - 1].outX + ' ' + ctrl[i - 1].outY + ' ' + ctrl[i].inX + ' ' + ctrl[i].inY + ' ' + pts[i].x + ' ' + pts[i].y;
    }
    el(svg, 'path', {
        d: d + 'L' + pts[11].x + ' ' + zero + 'L' + pts[0].x + ' ' + zero + 'Z',
        fill: 'rgba(151,187,205,.2)'
    });
    el(svg, 'path', {d: d, fill: 'none', stroke: '#97bbcd', 'stroke-width': 4});
    pts.forEach(function (p) {
        el(svg, 'circle', {cx: p.x, cy: p.y, r: 6, fill: '#97bbcd', stroke: '#fff', 'stroke-width': 2});
    });
}

function drawDonut() {
    var svg = document.getElementById('donutChart');
    var cx = 1839, cy = 1386, outer = 133, inner = 65;
    var slices = [
        [0, 6, '#97bbcd'], [6, 83.5, '#dcdcdc'], [83.5, 161, '#f7464a'], [161, 186.5, '#46bfbd'],
        [186.5, 308, '#fdb45c'], [308, 321.5, '#949fb1'], [321.5, 328, '#4d5360'], [328, 335, '#d4336a'],
        [335, 341.5, '#1b6658'], [341.5, 348, '#4dbd05'], [348, 354, '#a8cc7c'], [354, 360, '#b82b50']
    ];
    function pt(r, deg) {
        var a = (deg - 90) * Math.PI / 180;
        return (cx + r * Math.cos(a)) + ' ' + (cy + r * Math.sin(a));
    }
    slices.forEach(function (s) {
        var big = s[1] - s[0] > 180 ? 1 : 0;
        el(svg, 'path', {
            d: 'M' + pt(outer, s[0]) + 'A' + outer + ' ' + outer + ' 0 ' + big + ' 1 ' + pt(outer, s[1]) +
               'L' + pt(inner, s[1]) + 'A' + inner + ' ' + inner + ' 0 ' + big + ' 0 ' + pt(inner, s[0]) + 'Z',
            fill: s[2], stroke: '#fff', 'stroke-width': 4
        });
    });
}

drawLineChart();
drawDonut();
```
